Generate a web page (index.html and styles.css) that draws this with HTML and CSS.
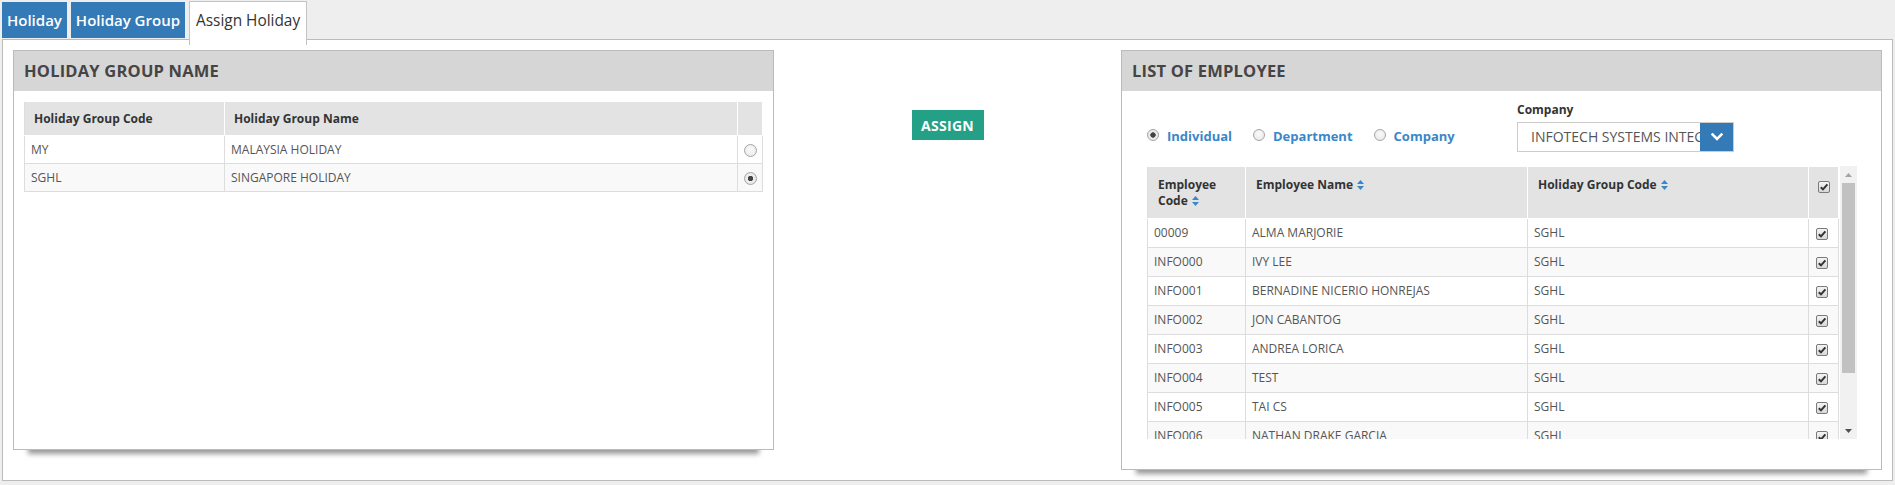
FILE: index.html
```html
<!DOCTYPE html>
<html>
<head>
<meta charset="utf-8">
<title>Assign Holiday</title>
<link rel="stylesheet" href="styles.css">
</head>
<body>
<div class="page">
  <div class="tabs">
    <div class="tab">Holiday</div>
    <div class="tab">Holiday Group</div>
    <div class="tab active">Assign Holiday</div>
  </div>
  <div class="container">
    <section class="panel panel-left">
      <div class="panel-head">HOLIDAY GROUP NAME</div>
      <div class="panel-body">
        <table class="grid grid-groups">
          <colgroup><col class="c-code"><col><col class="c-radio"></colgroup>
          <thead>
            <tr><th>Holiday Group Code</th><th>Holiday Group Name</th><th></th></tr>
          </thead>
          <tbody>
            <tr><td>MY</td><td>MALAYSIA HOLIDAY</td><td class="center"><span class="radio"></span></td></tr>
            <tr class="alt"><td>SGHL</td><td>SINGAPORE HOLIDAY</td><td class="center"><span class="radio checked"></span></td></tr>
          </tbody>
        </table>
      </div>
    </section>

    <div class="middle">
      <button class="btn-assign">ASSIGN</button>
    </div>

    <section class="panel panel-right">
      <div class="panel-head">LIST OF EMPLOYEE</div>
      <div class="emp-body">
        <div class="filter-row">
          <div class="radios">
            <label class="opt"><span class="radio checked"></span>Individual</label>
            <label class="opt"><span class="radio"></span>Department</label>
            <label class="opt"><span class="radio"></span>Company</label>
          </div>
          <div class="company-field">
            <div class="field-label">Company</div>
            <div class="select">
              <span class="select-text">INFOTECH SYSTEMS INTEGRATORS SDN BHD</span>
              <span class="select-btn"><svg width="12" height="8" viewBox="0 0 12 8"><path d="M1.5 1.5 L6 6 L10.5 1.5" fill="none" stroke="#fff" stroke-width="2.6" stroke-linecap="square"/></svg></span>
            </div>
          </div>
        </div>
        <div class="scroll-wrap">
          <div class="scroll-view">
            <table class="grid grid-emp">
              <colgroup><col class="e-code"><col class="e-name"><col class="e-grp"><col class="e-chk"></colgroup>
              <thead>
                <tr>
                  <th>Employee<br>Code <svg class="sort" width="7" height="10" viewBox="0 0 7 10"><path d="M0 4 L3.5 0 L7 4Z M0 6 L3.5 10 L7 6Z" fill="#3a87c8"/></svg></th>
                  <th>Employee Name <svg class="sort" width="7" height="10" viewBox="0 0 7 10"><path d="M0 4 L3.5 0 L7 4Z M0 6 L3.5 10 L7 6Z" fill="#3a87c8"/></svg></th>
                  <th>Holiday Group Code <svg class="sort" width="7" height="10" viewBox="0 0 7 10"><path d="M0 4 L3.5 0 L7 4Z M0 6 L3.5 10 L7 6Z" fill="#3a87c8"/></svg></th>
                  <th class="center"><span class="chk"><svg width="10" height="10" viewBox="0 0 10 10"><path d="M1.8 5.2 L4 7.4 L8.4 2.4" fill="none" stroke="#333" stroke-width="2"/></svg></span></th>
                </tr>
              </thead>
              <tbody>
                <tr><td>00009</td><td>ALMA MARJORIE</td><td>SGHL</td><td class="cb"><span class="chk"><svg width="10" height="10" viewBox="0 0 10 10"><path d="M1.8 5.2 L4 7.4 L8.4 2.4" fill="none" stroke="#333" stroke-width="2"/></svg></span></td></tr>
                <tr class="alt"><td>INFO000</td><td>IVY LEE</td><td>SGHL</td><td class="cb"><span class="chk"><svg width="10" height="10" viewBox="0 0 10 10"><path d="M1.8 5.2 L4 7.4 L8.4 2.4" fill="none" stroke="#333" stroke-width="2"/></svg></span></td></tr>
                <tr><td>INFO001</td><td>BERNADINE NICERIO HONREJAS</td><td>SGHL</td><td class="cb"><span class="chk"><svg width="10" height="10" viewBox="0 0 10 10"><path d="M1.8 5.2 L4 7.4 L8.4 2.4" fill="none" stroke="#333" stroke-width="2"/></svg></span></td></tr>
                <tr class="alt"><td>INFO002</td><td>JON CABANTOG</td><td>SGHL</td><td class="cb"><span class="chk"><svg width="10" height="10" viewBox="0 0 10 10"><path d="M1.8 5.2 L4 7.4 L8.4 2.4" fill="none" stroke="#333" stroke-width="2"/></svg></span></td></tr>
                <tr><td>INFO003</td><td>ANDREA LORICA</td><td>SGHL</td><td class="cb"><span class="chk"><svg width="10" height="10" viewBox="0 0 10 10"><path d="M1.8 5.2 L4 7.4 L8.4 2.4" fill="none" stroke="#333" stroke-width="2"/></svg></span></td></tr>
                <tr class="alt"><td>INFO004</td><td>TEST</td><td>SGHL</td><td class="cb"><span class="chk"><svg width="10" height="10" viewBox="0 0 10 10"><path d="M1.8 5.2 L4 7.4 L8.4 2.4" fill="none" stroke="#333" stroke-width="2"/></svg></span></td></tr>
                <tr><td>INFO005</td><td>TAI CS</td><td>SGHL</td><td class="cb"><span class="chk"><svg width="10" height="10" viewBox="0 0 10 10"><path d="M1.8 5.2 L4 7.4 L8.4 2.4" fill="none" stroke="#333" stroke-width="2"/></svg></span></td></tr>
                <tr class="alt"><td>INFO006</td><td>NATHAN DRAKE GARCIA</td><td>SGHL</td><td class="cb"><span class="chk"><svg width="10" height="10" viewBox="0 0 10 10"><path d="M1.8 5.2 L4 7.4 L8.4 2.4" fill="none" stroke="#333" stroke-width="2"/></svg></span></td></tr>
              </tbody>
            </table>
          </div>
          <div class="vbar">
            <div class="vbar-btn"><svg width="7" height="4" viewBox="0 0 7 4"><path d="M0 4 L3.5 0 L7 4Z" fill="#a3a3a3"/></svg></div>
            <div class="vbar-thumb"></div>
            <div class="vbar-btn down"><svg width="7" height="4" viewBox="0 0 7 4"><path d="M0 0 L3.5 4 L7 0Z" fill="#505050"/></svg></div>
          </div>
        </div>
      </div>
    </section>
  </div>
</div>
</body>
</html>
```
FILE: styles.css
```css
* { box-sizing: border-box; }
html, body { margin: 0; padding: 0; }
body {
  background: #eeeeee;
  font-family: "Open Sans", "Liberation Sans", sans-serif;
  color: #555;
  font-size: 12px;
}
.page { padding: 2px 2px 0 2px; }

/* tabs */
.tabs {
  display: flex;
  gap: 4px;
  height: 37px;
  align-items: flex-start;
}
.tab {
  height: 36px;
  line-height: 36px;
  padding: 0 5px;
  background: #337ab7;
  color: #fff;
  font-size: 15px;
  font-weight: 600;
}
.tab.active {
  position: relative;
  z-index: 2;
  margin-top: -1px;
  height: 44px;
  line-height: 36px;
  padding: 1px 6px 0;
  background: #fff;
  color: #333;
  font-weight: 400;
  font-size: 15.4px;
  border: 1px solid #c4c4c4;
  border-bottom: none;
}

/* main container */
.container {
  background: #fff;
  border: 1px solid #bbb;
  padding: 10px;
  display: grid;
  grid-template-columns: 761px 1fr 761px;
  align-items: start;
  box-shadow: 0 18px 5px -15px rgba(0,0,0,0.4);
}

.panel {
  background: #fff;
  border: 1px solid #bbb;
  box-shadow: 0 19px 5px -15px rgba(0,0,0,0.4);
}
.panel-left { height: 400px; }
.panel-head {
  background: #d6d6d6;
  height: 40px;
  line-height: 40px;
  padding: 0 10px;
  font-size: 16.5px;
  font-weight: 700;
  color: #454545;
  letter-spacing: 0.2px;
}
.panel-body { padding: 10px; }

/* tables */
.grid {
  width: 100%;
  border-collapse: collapse;
  table-layout: fixed;
}
.grid th {
  background: #e3e3e3;
  color: #333;
  font-weight: 700;
  font-size: 12px;
  text-align: left;
  border: 1px solid #fff;
}
.grid td {
  border: 1px solid #ddd;
  color: #555;
  font-size: 12px;
  white-space: nowrap;
  overflow: hidden;
}
.grid tr.alt td { background: #f9f9f9; }
.grid .center { text-align: center; }

.grid-groups th { height: 34px; padding: 0 9px; line-height: 17px; }
.grid-groups td { height: 28px; padding: 0 6px; line-height: 17px; }
.grid-groups .c-code { width: 200px; }
.grid-groups .c-radio { width: 25px; }
.grid-groups td.center, .grid-groups th:last-child { padding: 0; }
.grid-groups td:first-child, .grid-groups th:first-child { border-left-color: #ddd; }

.radio {
  display: inline-block;
  width: 13px;
  height: 13px;
  border-radius: 50%;
  border: 1px solid #a6a6a6;
  background: radial-gradient(circle at 50% 40%, #fafafa 0%, #e6e6e6 100%);
  vertical-align: middle;
}
.radio.checked {
  background: radial-gradient(circle, #444 0, #444 2.4px, #eee 3px, #e4e4e4 100%);
}

/* middle */
.middle {
  display: flex;
  justify-content: center;
  padding-top: 60px;
}
.btn-assign {
  width: 72px;
  height: 30px;
  border: none;
  background: #23a085;
  color: #fff;
  font-family: "Open Sans", "Liberation Sans", sans-serif;
  font-weight: 700;
  font-size: 14px;
  letter-spacing: 0.3px;
  padding: 0;
}

/* employee panel */
.emp-body { padding: 10px 25px 30px; }
.filter-row {
  display: flex;
  align-items: flex-end;
}
.radios {
  width: 370px;
  height: 30px;
  display: flex;
  align-items: center;
  gap: 21px;
  padding-bottom: 2px;
}
.opt {
  display: flex;
  align-items: center;
  gap: 8px;
  color: #3a87c8;
  font-weight: 700;
  font-size: 13px;
}
.opt .radio { width: 12px; height: 12px; margin-top: -2px; }
.field-label {
  color: #333;
  font-weight: 700;
  font-size: 12px;
  line-height: 18px;
  margin-bottom: 3px;
}
.select {
  width: 217px;
  height: 30px;
  border: 1px solid #ccc;
  display: flex;
  overflow: hidden;
}
.select-text {
  flex: 1;
  padding-left: 13px;
  line-height: 28px;
  font-size: 14px;
  color: #555;
  white-space: nowrap;
  overflow: hidden;
}
.select-btn {
  width: 34px;
  height: 30px;
  margin: -1px -1px 0 0;
  background: #337ab7;
  display: flex;
  align-items: center;
  justify-content: center;
  flex: none;
}

.scroll-wrap {
  margin-top: 14px;
  width: 710px;
  height: 273px;
  display: flex;
}
.scroll-view {
  width: 693px;
  overflow: hidden;
}
.vbar {
  width: 17px;
  background: #f1f1f1;
  display: flex;
  flex-direction: column;
}
.vbar-btn {
  height: 17px;
  display: flex;
  align-items: center;
  justify-content: center;
  flex: none;
}
.vbar-btn.down { margin-top: auto; }
.vbar-thumb {
  height: 190px;
  margin: 0 2px;
  background: #c1c1c1;
}

.grid-emp { width: 691px; }
.grid-emp .e-code { width: 98px; }
.grid-emp .e-name { width: 282px; }
.grid-emp .e-grp { width: 281px; }
.grid-emp .e-chk { width: 30px; }
.grid-emp th {
  height: 52px;
  padding: 10px 9px 0 10px;
  line-height: 16px;
  vertical-align: top;
}
.grid-emp th.center { padding: 11px 0 0; }
.grid-emp td { height: 29px; padding: 0 6px; line-height: 16px; }
.grid-emp td.cb { padding: 0 0 0 7px; }
.grid-emp td:first-child, .grid-emp th:first-child { border-left-color: #ddd; }
.sort { vertical-align: -1px; margin-left: 1px; }

.chk {
  display: inline-flex;
  align-items: center;
  justify-content: center;
  width: 12px;
  height: 12px;
  border: 1px solid #7a7a7a;
  border-radius: 2px;
  background: linear-gradient(#f4f4f4, #d8d8d8);
  vertical-align: middle;
}
.chk svg { display: block; }
```
